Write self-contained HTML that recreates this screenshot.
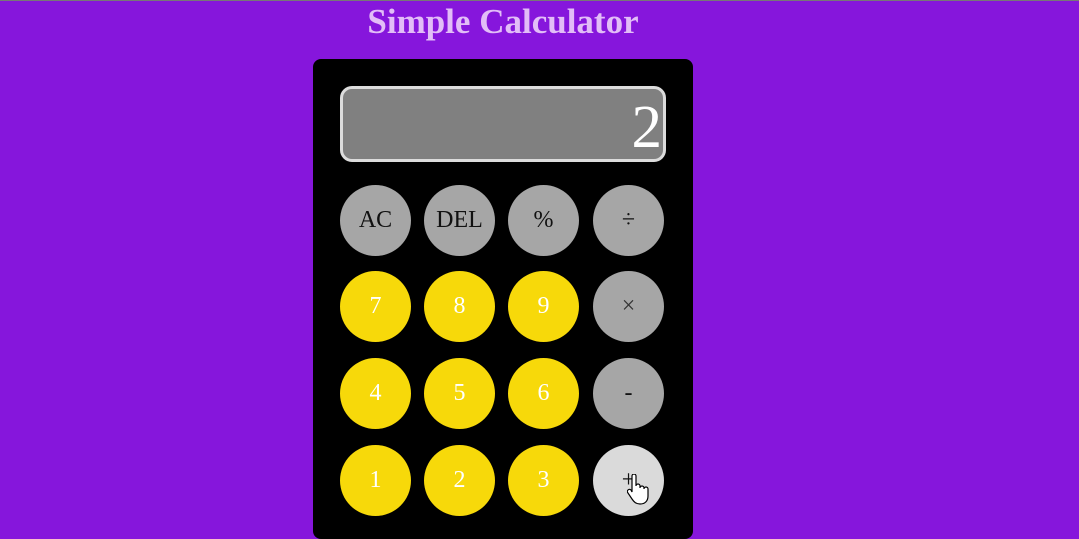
<!DOCTYPE html>
<html><head><style>
html,body{margin:0;padding:0;width:1079px;height:527px;overflow:hidden;background:#8616dc;font-family:"Liberation Serif",serif;}
.topline{position:absolute;left:0;top:0;width:1079px;height:1px;background:#777;}
h1{position:absolute;left:0;width:1006px;top:2px;margin:0;text-align:center;font-size:35px;font-weight:bold;color:#e2bdf7;}
.card{position:absolute;left:313px;top:59px;width:380px;height:480px;background:#000;border-radius:8px;}
.disp{position:absolute;left:340px;top:86px;width:320px;height:70px;background:#808080;border:3px solid #dcdcdc;border-radius:12px;color:#fff;font-size:61px;text-align:right;line-height:78px;}
.disp span{margin-right:1px;}
.b{position:absolute;width:71px;height:71px;border-radius:50%;background:#a6a6a6;color:#111;font-size:24px;text-align:center;line-height:71px;}
.y{background:#f7d90a;color:#fff;}
.h{background:#dadada;}
</style></head><body>
<div class="topline"></div>
<h1>Simple Calculator</h1>
<div class="card"></div>
<div class="disp"><span>2</span></div>
<div class="b" style="left:340px;top:185px">AC</div>
<div class="b" style="left:424px;top:185px">DEL</div>
<div class="b" style="left:508px;top:185px">%</div>
<div class="b" style="left:593px;top:185px">÷</div>
<div class="b y" style="left:340px;top:271px">7</div>
<div class="b y" style="left:424px;top:271px">8</div>
<div class="b y" style="left:508px;top:271px">9</div>
<div class="b" style="left:593px;top:271px;color:#333">×</div>
<div class="b y" style="left:340px;top:358px">4</div>
<div class="b y" style="left:424px;top:358px">5</div>
<div class="b y" style="left:508px;top:358px">6</div>
<div class="b" style="left:593px;top:358px">-</div>
<div class="b y" style="left:340px;top:445px">1</div>
<div class="b y" style="left:424px;top:445px">2</div>
<div class="b y" style="left:508px;top:445px">3</div>
<div class="b h" style="left:593px;top:445px">+</div>
<svg style="position:absolute;left:627px;top:474px" width="24" height="32" viewBox="0 0 24 32"><path d="M5 2 a2 2 0 0 1 4 0 v10 a2 2 0 0 1 4 0 v2 a2 2 0 0 1 4 0 v1 a2 2 0 0 1 4 0 v7 c0 5 -3 8 -8 8 c-4 0 -6 -2 -8 -5 l-4 -6 a2 2 0 0 1 3 -3 l1 2 z" fill="#fff" stroke="#000" stroke-width="1.2"/></svg>
</body></html>
